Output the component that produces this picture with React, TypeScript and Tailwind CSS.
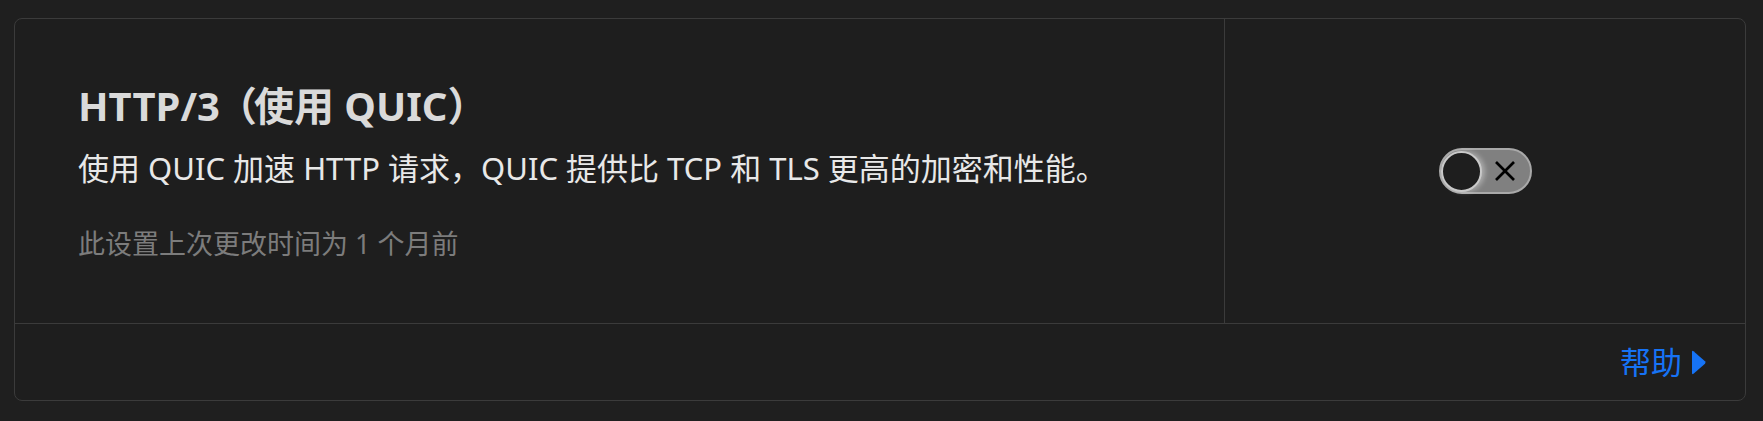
import React, { useState } from 'react'

const font = { fontFamily: '"Noto Sans", "Noto Sans CJK SC", sans-serif' }

const Toggle: React.FC<{ on: boolean; onChange: (v: boolean) => void }> = ({ on, onChange }) => {
  return (
    <button
      type="button"
      role="switch"
      aria-checked={on}
      onClick={() => onChange(!on)}
      className="relative flex h-[46px] w-[93px] items-center rounded-full border-2 border-[#a9a9a9] bg-[#808080] p-0"
    >
      <span className="h-[41px] w-[41px] rounded-full border-2 border-[#c9c9c9] bg-[#1e1e1e] shadow-[3px_0_5px_rgba(255,255,255,0.35)]" />
      <svg
        className="ml-[13px]"
        width="20"
        height="20"
        viewBox="0 0 20 20"
        fill="none"
        stroke="#000"
        strokeWidth="2.6"
        strokeLinecap="butt"
      >
        <line x1="1" y1="1" x2="19" y2="19" />
        <line x1="19" y1="1" x2="1" y2="19" />
      </svg>
    </button>
  )
}

export default function App() {
  const [enabled, setEnabled] = useState(false)

  return (
    <div className="h-[421px] w-full bg-[#1f1f1f] pb-[20px] pl-[14px] pr-[17px] pt-[18px]" style={font}>
      <div className="flex h-[383px] flex-col rounded-lg border border-[#3b3b3b] bg-[#1e1e1e]">
        {/* Setting row */}
        <div className="flex h-[305px] border-b border-[#3b3b3b]">
          <div className="flex w-[1210px] flex-col justify-center border-r border-[#3b3b3b] pl-[63px]">
            <h2 className="text-[40px] font-bold leading-[50px] text-[#dadada]">
              HTTP/3<span className="-mx-[3px]">（</span>使用 QUIC<span className="-mr-[3px]">）</span>
            </h2>
            <p className="mt-[15px] text-[31px] leading-[44px] text-[#e8e8e8]">
              使用 QUIC 加速 HTTP 请求，QUIC 提供比 TCP 和 TLS 更高的加密和性能。
            </p>
            <p className="mt-[36px] text-[27px] leading-[36px] text-[#7c7c7c]">此设置上次更改时间为 1 个月前</p>
          </div>
          <div className="flex flex-1 items-center justify-center">
            <Toggle on={enabled} onChange={setEnabled} />
          </div>
        </div>

        {/* Footer */}
        <div className="flex flex-1 items-center justify-end pr-[39px]">
          <a href="#" className="flex items-center gap-[10px] text-[31px] leading-none text-[#1673f5]">
            帮助
            <svg width="14" height="25" viewBox="0 0 14 25" fill="#1673f5">
              <path d="M1.5 1.2 L13 11.3 Q14 12.5 13 13.7 L1.5 23.8 Q0 24.8 0 23 L0 2 Q0 0.2 1.5 1.2 Z" />
            </svg>
          </a>
        </div>
      </div>
    </div>
  )
}
